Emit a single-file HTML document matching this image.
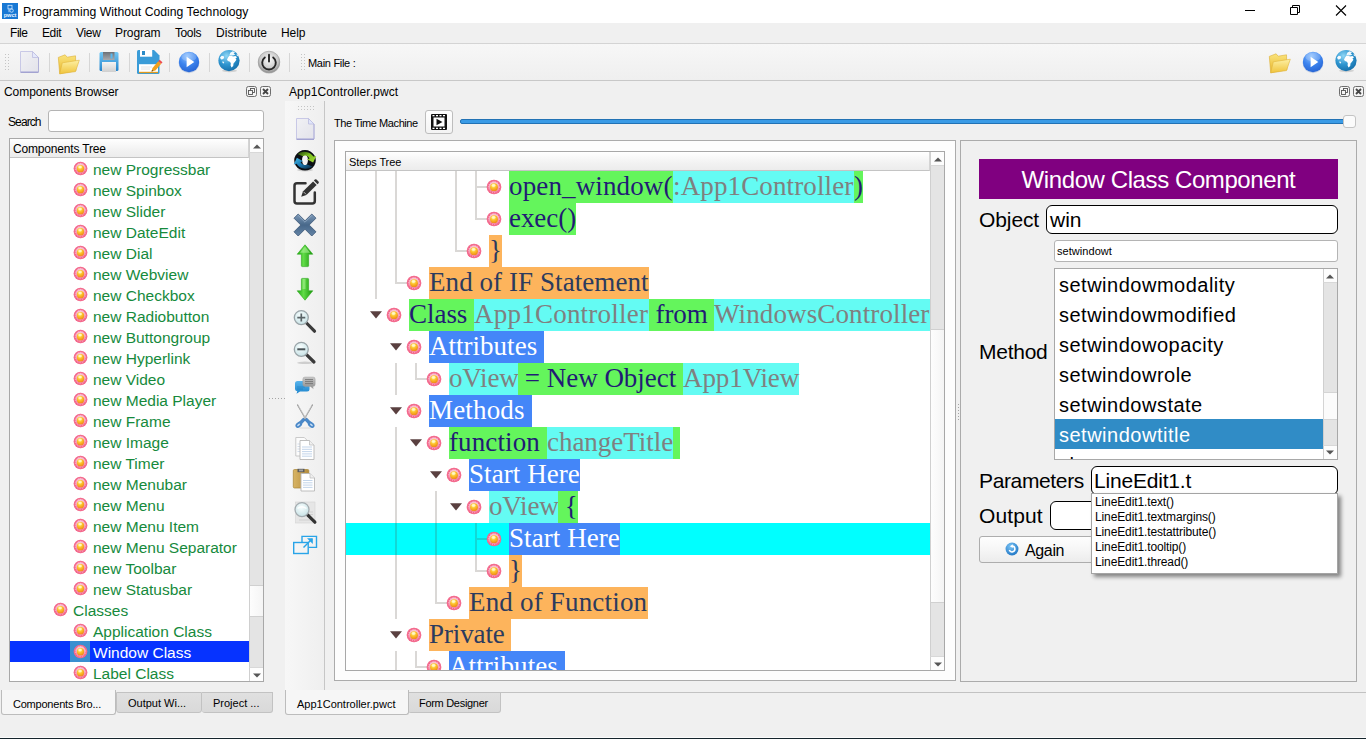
<!DOCTYPE html>
<html>
<head>
<meta charset="utf-8">
<title>PWCT</title>
<style>
*{box-sizing:border-box;margin:0;padding:0}
html,body{width:1366px;height:739px;overflow:hidden;background:#f0f0f0;font-family:"Liberation Sans",sans-serif;font-size:12px;color:#000}
.abs{position:absolute}
.t{position:absolute;white-space:nowrap;line-height:1}
#titlebar{left:0;top:0;width:1366px;height:23px;background:#fff}
#menubar{left:0;top:23px;width:1366px;height:20px;background:#f0f0f0}
#toolbar{left:0;top:43px;width:1366px;height:38px;background:linear-gradient(#f7f7f7,#efefef);border-top:1px solid #d4d4d4;border-bottom:1px solid #c8c8c8}
.menu{position:absolute;top:26px;font-size:12px;line-height:14px;white-space:nowrap}
.sep{position:absolute;top:53px;width:1px;height:19px;background:#d6d6d6}

.li{font-size:15.5px;line-height:21px;height:21px;margin-top:1px}
.tab{font-size:11px;line-height:13px}

.sg{position:absolute;height:32px;font-family:"Liberation Serif",serif;font-size:27px;line-height:31px;white-space:nowrap;overflow:visible}

.lbl{font-size:21px;line-height:24px}
.lit{left:4px;font-size:20px;line-height:28px;letter-spacing:.5px}
.pp{left:1095px;font-size:12px;line-height:14px;letter-spacing:-.12px}
/* SECTION-CSS */
</style>
</head>
<body>
<!-- title bar -->
<div class="abs" id="titlebar"></div>
<div class="abs" id="menubar"></div>
<div class="abs" id="toolbar"></div>

<svg width="0" height="0" style="position:absolute">
<defs>
<radialGradient id="gBallO" cx="50%" cy="40%" r="60%"><stop offset="0" stop-color="#fde4ec"/><stop offset="0.6" stop-color="#f9b8cc"/><stop offset="1" stop-color="#f37a9c"/></radialGradient>
<radialGradient id="gBallI" cx="42%" cy="30%" r="70%"><stop offset="0" stop-color="#fff6a8"/><stop offset="0.45" stop-color="#fcc52c"/><stop offset="1" stop-color="#f08a18"/></radialGradient>
<symbol id="ball" viewBox="0 0 16 16"><circle cx="8" cy="8" r="7.300" fill="#f2577f"/><circle cx="8" cy="8" r="6.700" fill="none" stroke="#f7a0b8" stroke-width=".5" opacity=".6"/><circle cx="8" cy="7.800" r="5.300" fill="url(#gBallO)"/><circle cx="8" cy="8" r="5.500" fill="none" stroke="#fff" stroke-width=".7" stroke-dasharray="1 .9" opacity=".8"/><circle cx="8" cy="8.200" r="3.900" fill="url(#gBallI)"/><ellipse cx="7.600" cy="6.400" rx="1.900" ry="1.300" fill="#fffbd0" opacity=".8"/></symbol>
<radialGradient id="gPlay" cx="42%" cy="22%" r="85%"><stop offset="0" stop-color="#8cc0ff"/><stop offset="0.5" stop-color="#3c84ee"/><stop offset="1" stop-color="#2460d0"/></radialGradient>
<symbol id="play" viewBox="0 0 24 24"><ellipse cx="12" cy="13.200" rx="10.300" ry="10" fill="#9db4d8" opacity=".5"/><circle cx="12" cy="12" r="10.200" fill="url(#gPlay)"/><ellipse cx="12" cy="7" rx="7.600" ry="4.400" fill="#fff" opacity=".2"/><path d="M9.600 6.700L17.300 12L9.600 17.300Z" fill="#fff"/></symbol>
<radialGradient id="gGlobe" cx="38%" cy="28%" r="80%"><stop offset="0" stop-color="#8fd6f5"/><stop offset="0.5" stop-color="#2f96d0"/><stop offset="1" stop-color="#136aa6"/></radialGradient>
<symbol id="globe" viewBox="0 0 24 24"><ellipse cx="12.500" cy="21.800" rx="7.500" ry="1.400" fill="#888" opacity=".3"/><circle cx="12" cy="11.600" r="10.600" fill="url(#gGlobe)"/><path d="M11.200 8.200l1.200-1.400 2.400-.3 1 .9 2.600-.4 1.800 1.300-1.700.9.900 1.600-1.600 2.300-1.300 1.300-.3 2.600-1.700 1.600-.9-2.200.2-2.400-1.300-1.600-1.600-.3-.9-1.600z" fill="#fff"/><path d="M13.500 3.600l2.200-1.400 2.300 1-1.400 1.300 1.900.9-2.700 1-1.600-.6-1.800.7.400-1.500z" fill="#fff" opacity=".92"/><path d="M3 8.600l1.700-1.800 2.100.4.300 1.700-1.400 1.300-1.700.2z" fill="#fff" opacity=".95"/><path d="M5.400 12.200l1.800.7-.4 1.700-1.300-.6z" fill="#fff" opacity=".9"/><path d="M19.600 4.800l1.800 1.500.4 1.300-2-.9z" fill="#fff" opacity=".85"/></symbol>
<linearGradient id="gFold1" x1="0" y1="0" x2="0" y2="1"><stop offset="0" stop-color="#fae47c"/><stop offset="1" stop-color="#e9b62c"/></linearGradient>
<linearGradient id="gFold2" x1="0" y1="0" x2="0" y2="1"><stop offset="0" stop-color="#fdf0a4"/><stop offset="1" stop-color="#f0c43c"/></linearGradient>
<symbol id="folder" viewBox="0 0 24 24"><path d="M1.800 5.400l6.800-2.600 2 2.400 8.400-1.400.4 15-16.200 3z" fill="url(#gFold1)" stroke="#dcae34" stroke-width=".6"/><path d="M3.200 21.800l2.600-11 17-2.600-3.800 11.400z" fill="url(#gFold2)" stroke="#e0b63c" stroke-width=".6"/></symbol>
</defs>
</svg>
<!-- title -->
<div class="abs" style="left:2px;top:3px;width:16px;height:16px;background:#1878d4"></div>
<svg class="abs" style="left:2px;top:3px" width="16" height="16" viewBox="0 0 16 16"><rect x="6" y="2.300" width="4" height="3.600" fill="none" stroke="#cfe6ff" stroke-width=".8"/><circle cx="9.600" cy="7.600" r="1.700" fill="none" stroke="#cfe6ff" stroke-width=".8"/><path d="M7 6v3.200" stroke="#cfe6ff" stroke-width=".8"/><text x="8" y="14.200" font-family="Liberation Sans" font-size="5.600" font-weight="bold" fill="#e8f3ff" text-anchor="middle">pwct</text></svg>
<div class="t" style="left:23px;top:5px;font-size:12.2px;line-height:14px;letter-spacing:.02px">Programming Without Coding Technology</div>
<!-- window buttons -->
<svg class="abs" style="left:1240px;top:0" width="126" height="23" viewBox="0 0 126 23"><path d="M5 10.500h10" stroke="#000" stroke-width="1"/><path d="M50.500 7.500h7v7h-7z M52.500 7.500v-2h7v7h-2" fill="none" stroke="#000" stroke-width="1"/><path d="M96 5.500l10 10M106 5.500l-10 10" stroke="#000" stroke-width="1.100"/></svg>
<!-- menu -->
<div class="menu" style="left:10px;letter-spacing:-0.45px">File</div>
<div class="menu" style="left:42px;letter-spacing:-0.4px">Edit</div>
<div class="menu" style="left:76px;letter-spacing:-0.3px">View</div>
<div class="menu" style="left:115px;letter-spacing:-0.08px">Program</div>
<div class="menu" style="left:175px;letter-spacing:-0.4px">Tools</div>
<div class="menu" style="left:216px;letter-spacing:0.03px">Distribute</div>
<div class="menu" style="left:281px;letter-spacing:-0.08px">Help</div>
<!-- toolbar -->
<svg class="abs" style="left:4px;top:53px" width="6" height="18" viewBox="0 0 6 18"><g fill="#c4c4c4"><rect x="1" y="1" width="1" height="1"/><rect x="1" y="4" width="1" height="1"/><rect x="1" y="7" width="1" height="1"/><rect x="1" y="10" width="1" height="1"/><rect x="1" y="13" width="1" height="1"/><rect x="1" y="16" width="1" height="1"/><rect x="4" y="1" width="1" height="1"/><rect x="4" y="4" width="1" height="1"/><rect x="4" y="7" width="1" height="1"/><rect x="4" y="10" width="1" height="1"/><rect x="4" y="13" width="1" height="1"/><rect x="4" y="16" width="1" height="1"/></g></svg>
<!-- new -->
<svg class="abs" style="left:18px;top:49px" width="24" height="26" viewBox="0 0 24 26"><defs><linearGradient id="gNew" x1="0" y1="0" x2="1" y2="1"><stop offset="0" stop-color="#f1f1f5"/><stop offset="1" stop-color="#e3e3ea"/></linearGradient></defs><path d="M2.500 2.500h12l6 6v14.500h-18z" fill="url(#gNew)" stroke="#c8c8e6" stroke-width="1"/><path d="M14.500 2.500v6h6z" fill="#e4e8fc" stroke="#bcbce0" stroke-width=".8"/><path d="M20.500 8.500v14.500" stroke="#b0b0d8" stroke-width="1"/><path d="M2.500 23.300h18" stroke="#a0a0d0" stroke-width="1.300"/></svg>
<div class="sep" style="left:49px"></div>
<svg class="abs" style="left:56px;top:52px" width="25" height="24"><use href="#folder"/></svg>
<div class="sep" style="left:89px"></div>
<!-- save -->
<svg class="abs" style="left:98px;top:51px" width="22" height="22" viewBox="0 0 22 22"><defs><linearGradient id="gSv" x1="0" y1="0" x2="0" y2="1"><stop offset="0" stop-color="#74c8f4"/><stop offset="1" stop-color="#2484cc"/></linearGradient><linearGradient id="gSh" x1="0" y1="0" x2="0" y2="1"><stop offset="0" stop-color="#6c7076"/><stop offset="1" stop-color="#a8aaae"/></linearGradient><linearGradient id="gLb" x1="0" y1="0" x2="0" y2="1"><stop offset="0" stop-color="#f4f4f4"/><stop offset="1" stop-color="#cfcfcf"/></linearGradient></defs><path d="M1.500 2.500q0-1.500 1.500-1.500h16q1.500 0 1.500 1.500v16q0 1.500-1.500 1.500h-16q-1.500 0-1.500-1.500z" fill="url(#gSv)"/><rect x="5" y="1" width="11.500" height="8" fill="url(#gSh)"/><rect x="12.500" y="2.500" width="2" height="5" fill="#58b8f0"/><rect x="4" y="11" width="14" height="10" fill="url(#gLb)"/></svg>
<div class="sep" style="left:129px"></div>
<!-- save as -->
<svg class="abs" style="left:136px;top:49px" width="27" height="26" viewBox="0 0 27 26"><path d="M2.500 1h15.500l5.500 5.500v17q0 1.500-1.500 1.500h-19.500q-1.500 0-1.500-1.500v-21q0-1.500 1.500-1.500z" fill="#3a9cd8"/><rect x="4" y="1" width="12.200" height="6.700" fill="#fff"/><rect x="6" y="2" width="3" height="4" fill="#2c8cc8"/><rect x="3" y="15.200" width="19" height="8.600" fill="#fff"/><path d="M5 18h11M5 20h9" stroke="#e4e4e4" stroke-width="1"/><rect x="3" y="22.800" width="19" height="1.300" fill="#e09a20"/><path d="M15.500 22.600l1-3.600 5.800-6.700 2.900 2.500-5.800 6.700z" fill="#f2a01c"/><path d="M22.300 12.300l1.300-1.500 2.900 2.500-1.300 1.500z" fill="#ee4a50"/><path d="M15.500 22.600l.5-1.700 1.200 1.100z" fill="#222"/></svg>
<div class="sep" style="left:169px"></div>
<svg class="abs" style="left:177px;top:50px" width="24" height="24"><use href="#play"/></svg>
<div class="sep" style="left:209px"></div>
<svg class="abs" style="left:217px;top:49px" width="24" height="24"><use href="#globe"/></svg>
<div class="sep" style="left:249px"></div>
<!-- power -->
<svg class="abs" style="left:257px;top:50px" width="24" height="24" viewBox="0 0 24 24"><defs><radialGradient id="gPw" cx="50%" cy="40%" r="60%"><stop offset="0" stop-color="#fafafa"/><stop offset="0.7" stop-color="#c8c8c8"/><stop offset="1" stop-color="#8c8c8c"/></radialGradient></defs><ellipse cx="12" cy="13" rx="11" ry="10.600" fill="#aaa" opacity=".5"/><circle cx="12" cy="12" r="10.800" fill="url(#gPw)" stroke="#9a9a9a" stroke-width=".6"/><path d="M7.800 7.400a6.800 6.800 0 1 0 8.400 0" fill="none" stroke="#262626" stroke-width="1.900" stroke-linecap="round"/><path d="M12 4.600v7" stroke="#262626" stroke-width="1.900" stroke-linecap="round"/></svg>
<div class="sep" style="left:289px"></div>
<svg class="abs" style="left:300px;top:53px" width="6" height="18" viewBox="0 0 6 18"><g fill="#c4c4c4"><rect x="1" y="1" width="1" height="1"/><rect x="1" y="4" width="1" height="1"/><rect x="1" y="7" width="1" height="1"/><rect x="1" y="10" width="1" height="1"/><rect x="1" y="13" width="1" height="1"/><rect x="1" y="16" width="1" height="1"/><rect x="4" y="1" width="1" height="1"/><rect x="4" y="4" width="1" height="1"/><rect x="4" y="7" width="1" height="1"/><rect x="4" y="10" width="1" height="1"/><rect x="4" y="13" width="1" height="1"/><rect x="4" y="16" width="1" height="1"/></g></svg>
<div class="t" style="left:308px;top:57px;font-size:11px;line-height:13px;letter-spacing:-.3px">Main File :</div>
<!-- right toolbar icons -->
<svg class="abs" style="left:1267px;top:51px" width="25" height="24"><use href="#folder"/></svg>
<svg class="abs" style="left:1301px;top:50px" width="24" height="24"><use href="#play"/></svg>
<svg class="abs" style="left:1334px;top:49px" width="24" height="24"><use href="#globe"/></svg>

<!-- SECTION-TOP -->

<!-- LEFT DOCK -->
<div class="t" style="left:4px;top:85px;font-size:12px;line-height:14px;letter-spacing:-.05px">Components Browser</div>
<svg class="abs dockbtn" style="left:246px;top:86px" width="11" height="11" viewBox="0 0 11 11"><rect x=".5" y=".5" width="10" height="10" rx="2" fill="#f4f4f4" stroke="#6e6e6e"/><rect x="4.500" y="2.500" width="4" height="4" fill="none" stroke="#555" stroke-width=".9"/><rect x="2.500" y="4.500" width="4" height="4" fill="#f4f4f4" stroke="#555" stroke-width=".9"/></svg>
<svg class="abs dockbtn" style="left:260px;top:86px" width="11" height="11" viewBox="0 0 11 11"><rect x=".5" y=".5" width="10" height="10" rx="2" fill="#f4f4f4" stroke="#6e6e6e"/><path d="M3 3l5 5M8 3l-5 5" stroke="#444" stroke-width="1.800"/></svg>
<div class="t" style="left:8px;top:115px;font-size:12px;line-height:14px;letter-spacing:-.9px">Search</div>
<div class="abs" style="left:48px;top:110px;width:216px;height:22px;background:#fff;border:1px solid #b4b4b4;border-radius:3px"></div>
<!-- tree -->
<div class="abs" id="ltree" style="left:9px;top:138px;width:255px;height:544px;background:#fff;border:1px solid #a8a8a8;overflow:hidden">
<div class="abs" style="left:0;top:0;width:239px;height:19px;background:linear-gradient(#ffffff,#f2f2f2 60%,#ececec);border-bottom:1px solid #c4c4c4;border-right:1px solid #d4d4d4"></div>
<div class="t" style="left:3px;top:3px;font-size:12px;line-height:14px;letter-spacing:-.18px">Components Tree</div>
<svg class="abs" style="left:62.5px;top:21.5px" width="15" height="15"><use href="#ball"/></svg><div class="t li" style="left:83px;top:19px;color:#168a3c">new Progressbar</div><svg class="abs" style="left:62.5px;top:42.5px" width="15" height="15"><use href="#ball"/></svg><div class="t li" style="left:83px;top:40px;color:#168a3c">new Spinbox</div><svg class="abs" style="left:62.5px;top:63.5px" width="15" height="15"><use href="#ball"/></svg><div class="t li" style="left:83px;top:61px;color:#168a3c">new Slider</div><svg class="abs" style="left:62.5px;top:84.5px" width="15" height="15"><use href="#ball"/></svg><div class="t li" style="left:83px;top:82px;color:#168a3c">new DateEdit</div><svg class="abs" style="left:62.5px;top:105.5px" width="15" height="15"><use href="#ball"/></svg><div class="t li" style="left:83px;top:103px;color:#168a3c">new Dial</div><svg class="abs" style="left:62.5px;top:126.5px" width="15" height="15"><use href="#ball"/></svg><div class="t li" style="left:83px;top:124px;color:#168a3c">new Webview</div><svg class="abs" style="left:62.5px;top:147.5px" width="15" height="15"><use href="#ball"/></svg><div class="t li" style="left:83px;top:145px;color:#168a3c">new Checkbox</div><svg class="abs" style="left:62.5px;top:168.5px" width="15" height="15"><use href="#ball"/></svg><div class="t li" style="left:83px;top:166px;color:#168a3c">new Radiobutton</div><svg class="abs" style="left:62.5px;top:189.5px" width="15" height="15"><use href="#ball"/></svg><div class="t li" style="left:83px;top:187px;color:#168a3c">new Buttongroup</div><svg class="abs" style="left:62.5px;top:210.5px" width="15" height="15"><use href="#ball"/></svg><div class="t li" style="left:83px;top:208px;color:#168a3c">new Hyperlink</div><svg class="abs" style="left:62.5px;top:231.5px" width="15" height="15"><use href="#ball"/></svg><div class="t li" style="left:83px;top:229px;color:#168a3c">new Video</div><svg class="abs" style="left:62.5px;top:252.5px" width="15" height="15"><use href="#ball"/></svg><div class="t li" style="left:83px;top:250px;color:#168a3c">new Media Player</div><svg class="abs" style="left:62.5px;top:273.5px" width="15" height="15"><use href="#ball"/></svg><div class="t li" style="left:83px;top:271px;color:#168a3c">new Frame</div><svg class="abs" style="left:62.5px;top:294.5px" width="15" height="15"><use href="#ball"/></svg><div class="t li" style="left:83px;top:292px;color:#168a3c">new Image</div><svg class="abs" style="left:62.5px;top:315.5px" width="15" height="15"><use href="#ball"/></svg><div class="t li" style="left:83px;top:313px;color:#168a3c">new Timer</div><svg class="abs" style="left:62.5px;top:336.5px" width="15" height="15"><use href="#ball"/></svg><div class="t li" style="left:83px;top:334px;color:#168a3c">new Menubar</div><svg class="abs" style="left:62.5px;top:357.5px" width="15" height="15"><use href="#ball"/></svg><div class="t li" style="left:83px;top:355px;color:#168a3c">new Menu</div><svg class="abs" style="left:62.5px;top:378.5px" width="15" height="15"><use href="#ball"/></svg><div class="t li" style="left:83px;top:376px;color:#168a3c">new Menu Item</div><svg class="abs" style="left:62.5px;top:399.5px" width="15" height="15"><use href="#ball"/></svg><div class="t li" style="left:83px;top:397px;color:#168a3c">new Menu Separator</div><svg class="abs" style="left:62.5px;top:420.5px" width="15" height="15"><use href="#ball"/></svg><div class="t li" style="left:83px;top:418px;color:#168a3c">new Toolbar</div><svg class="abs" style="left:62.5px;top:441.5px" width="15" height="15"><use href="#ball"/></svg><div class="t li" style="left:83px;top:439px;color:#168a3c">new Statusbar</div><svg class="abs" style="left:42.5px;top:462.5px" width="15" height="15"><use href="#ball"/></svg><div class="t li" style="left:63px;top:460px;color:#168a3c">Classes</div><svg class="abs" style="left:62.5px;top:483.5px" width="15" height="15"><use href="#ball"/></svg><div class="t li" style="left:83px;top:481px;color:#168a3c">Application Class</div><div class="abs" style="left:0;top:502px;width:239px;height:21px;background:#0633ff"></div><div class="abs" style="left:60px;top:502px;width:20px;height:21px;background:#3a8fd0"></div><svg class="abs" style="left:62.5px;top:504.5px" width="15" height="15"><use href="#ball"/></svg><div class="t li" style="left:83px;top:502px;color:#fff">Window Class</div><svg class="abs" style="left:62.5px;top:525.5px" width="15" height="15"><use href="#ball"/></svg><div class="t li" style="left:83px;top:523px;color:#168a3c">Label Class</div>
<!-- left tree scrollbar -->
<div class="abs" style="left:239px;top:0;width:15px;height:543px;background:#e4e4e4;border-left:1px solid #cfcfcf"></div>
<div class="abs" style="left:239px;top:0;width:15px;height:14px;background:#fdfdfd;border-left:1px solid #cfcfcf;border-bottom:1px solid #d8d8d8"></div>
<svg class="abs" style="left:243px;top:5px" width="8" height="5" viewBox="0 0 8 5"><path d="M0 4.500L4 0.500L8 4.500z" fill="#555"/></svg>
<div class="abs" style="left:239px;top:446px;width:15px;height:32px;background:linear-gradient(90deg,#fdfdfd,#f4f4f4);border:1px solid #d0d0d0;border-right:none"></div>
<div class="abs" style="left:239px;top:528px;width:15px;height:15px;background:#fdfdfd;border-left:1px solid #cfcfcf;border-top:1px solid #d8d8d8"></div>
<svg class="abs" style="left:243px;top:534px" width="8" height="5" viewBox="0 0 8 5"><path d="M0 .5L4 4.500L8 .5z" fill="#555"/></svg>
</div>
<!-- left tabs -->
<div class="abs" style="left:116px;top:692px;width:86px;height:21px;background:linear-gradient(#e0e0e0,#d9d9d9);border:1px solid #c2c2c2;border-radius:0 0 3px 3px"></div>
<div class="abs" style="left:202px;top:692px;width:71px;height:21px;background:linear-gradient(#e0e0e0,#d9d9d9);border:1px solid #c2c2c2;border-left:none;border-radius:0 0 3px 3px"></div>
<div class="abs" style="left:1px;top:690px;width:115px;height:25px;background:#f6f6f6;border:1px solid #bcbcbc;border-top:none;border-radius:0 0 3px 3px"></div>
<div class="t tab" style="left:13px;top:698px;letter-spacing:-.22px">Components Bro...</div>
<div class="t tab" style="left:128px;top:697px">Output Wi...</div>
<div class="t tab" style="left:213px;top:697px">Project ...</div>
<!-- SECTION-LEFT -->

<!-- MID DOCK -->
<div class="t" style="left:289px;top:85px;font-size:12px;line-height:14px;letter-spacing:.1px">App1Controller.pwct</div>
<svg class="abs" style="left:1339px;top:86px" width="11" height="11" viewBox="0 0 11 11"><rect x=".5" y=".5" width="10" height="10" rx="2" fill="#f4f4f4" stroke="#6e6e6e"/><rect x="4.500" y="2.500" width="4" height="4" fill="none" stroke="#555" stroke-width=".9"/><rect x="2.500" y="4.500" width="4" height="4" fill="#f4f4f4" stroke="#555" stroke-width=".9"/></svg>
<svg class="abs" style="left:1353px;top:86px" width="11" height="11" viewBox="0 0 11 11"><rect x=".5" y=".5" width="10" height="10" rx="2" fill="#f4f4f4" stroke="#6e6e6e"/><path d="M3 3l5 5M8 3l-5 5" stroke="#444" stroke-width="1.800"/></svg>
<!-- vertical toolbar -->
<div class="abs" style="left:285px;top:101px;width:40px;height:590px;background:linear-gradient(90deg,#f7f7f7,#efefef);border-right:1px solid #c6c6c6"></div>
<svg class="abs" style="left:297px;top:105px" width="18" height="6" viewBox="0 0 18 6"><g fill="#c4c4c4"><rect x="1" y="1" width="1" height="1"/><rect x="4" y="1" width="1" height="1"/><rect x="7" y="1" width="1" height="1"/><rect x="10" y="1" width="1" height="1"/><rect x="13" y="1" width="1" height="1"/><rect x="16" y="1" width="1" height="1"/><rect x="1" y="4" width="1" height="1"/><rect x="4" y="4" width="1" height="1"/><rect x="7" y="4" width="1" height="1"/><rect x="10" y="4" width="1" height="1"/><rect x="13" y="4" width="1" height="1"/><rect x="16" y="4" width="1" height="1"/></g></svg>

<!-- v: new -->
<svg class="abs" style="left:295px;top:117px" width="21" height="24" viewBox="0 0 21 24"><path d="M1.500 1.500h12l5.500 5.500v15h-17.500z" fill="url(#gNew)" stroke="#c8c8e6" stroke-width="1"/><path d="M13.500 1.500v5.500h5.500z" fill="#e0e6fc" stroke="#bcbce0" stroke-width=".8"/><path d="M19 7v15" stroke="#b0b0d8" stroke-width="1"/><path d="M1.500 22.300h17.500" stroke="#a0a0d0" stroke-width="1.300"/></svg>
<!-- v: refresh -->
<svg class="abs" style="left:293px;top:149px" width="24" height="23" viewBox="0 0 24 23"><defs><linearGradient id="gRg" x1="0" y1="0" x2="1" y2="1"><stop offset="0" stop-color="#1c3c08"/><stop offset="0.45" stop-color="#7cc020"/><stop offset="1" stop-color="#a4dc38"/></linearGradient><linearGradient id="gRb" x1="1" y1="1" x2="0" y2="0"><stop offset="0" stop-color="#0a2238"/><stop offset="0.5" stop-color="#1a78b0"/><stop offset="1" stop-color="#44bcec"/></linearGradient></defs>
<ellipse cx="12" cy="21" rx="8" ry="1.400" fill="#000" opacity=".15"/>
<path d="M12 1a10.800 10.300 0 1 0 .01 0z M12 5.600a2.900 5.500 0 1 1-.01 0z" fill="#0b0e13" fill-rule="evenodd"/>
<path d="M4.600 5a10.600 10 0 0 1 15.800 2.600l2.900-.6-3.200 6.600-6.200-3.400 2.600-.8a5.200 6.200 0 0 0-6.600-2.200z" fill="url(#gRg)"/>
<path d="M19.400 17.600a10.600 10 0 0 1-15.800-2.800l-2.900.6 3.200-6.600 6.200 3.400-2.600.8a5.200 6.200 0 0 0 6.600 2.400z" fill="url(#gRb)"/>
</svg>
<!-- v: edit -->
<svg class="abs" style="left:292px;top:179px" width="27" height="27" viewBox="0 0 27 27"><path d="M13.500 4.200h-8.500q-2.500 0-2.500 2.500v15.300q0 2.500 2.500 2.500h15.300q2.500 0 2.500-2.500v-8.500" fill="none" stroke="#333" stroke-width="2.500" stroke-linecap="round"/><path d="M9.200 17.800l1.700-5.200 10.200-10.200 3.500 3.500-10.200 10.200z" fill="#333"/><path d="M21.900 1.600l1-1q.8-.6 1.600 0l2 2q.6.800 0 1.600l-1 1z" fill="#333"/><path d="M11.600 12.900l2.500 2.500" stroke="#f4f4f4" stroke-width=".7"/></svg>
<!-- v: X -->
<svg class="abs" style="left:293px;top:213px" width="24" height="24" viewBox="0 0 24 24"><defs><linearGradient id="gX" x1="0" y1="0" x2="0" y2="1"><stop offset="0" stop-color="#7e9ab8"/><stop offset="0.5" stop-color="#48688a"/><stop offset="1" stop-color="#6484a6"/></linearGradient></defs><path d="M5.200 1l6.800 6.800 6.800-6.800 4.200 4.200-6.800 6.800 6.800 6.800-4.200 4.200-6.800-6.800-6.800 6.800-4.200-4.200 6.800-6.800-6.800-6.800z" fill="url(#gX)" stroke="#3a5676" stroke-width=".8" stroke-linejoin="round"/><path d="M5.200 2.400l6.800 6.800 6.800-6.800" fill="none" stroke="#a8c0d8" stroke-width=".8" opacity=".7"/></svg>
<!-- v: up -->
<svg class="abs" style="left:296px;top:244px" width="18" height="24" viewBox="0 0 18 24"><defs><linearGradient id="gUp" x1="0" y1="0" x2="1" y2="0"><stop offset="0" stop-color="#22a814"/><stop offset="0.4" stop-color="#62dc48"/><stop offset="1" stop-color="#17940c"/></linearGradient></defs><path d="M9 .8l7.800 9.400h-4.200v11.600q0 .8-.8.800h-5.600q-.8 0-.8-.8v-11.600h-4.200z" fill="url(#gUp)" stroke="#2aa81a" stroke-width=".6"/><path d="M9 2.500l5 6.200h-10z" fill="#b4f4a0" opacity=".55"/></svg>
<!-- v: down -->
<svg class="abs" style="left:296px;top:277px" width="18" height="24" viewBox="0 0 18 24"><path d="M9 23.200l7.800-9.400h-4.200v-11.600q0-.8-.8-.8h-5.600q-.8 0-.8.800v11.600h-4.200z" fill="url(#gUp)" stroke="#2aa81a" stroke-width=".6"/><path d="M6.500 2h3v10h-3z" fill="#b4f4a0" opacity=".5"/></svg>
<!-- v: zoom in -->
<svg class="abs" style="left:292px;top:308px" width="26" height="26" viewBox="0 0 26 26"><defs><radialGradient id="gLens" cx="45%" cy="35%" r="70%"><stop offset="0" stop-color="#f8fefe"/><stop offset="1" stop-color="#c4e0e4"/></radialGradient></defs><path d="M14.500 15l8 8.200" stroke="#3a3a3a" stroke-width="3.200" stroke-linecap="round"/><circle cx="9.300" cy="9.600" r="7" fill="url(#gLens)" stroke="#9aa4a8" stroke-width="1.300"/><path d="M5.300 9.600h8M9.300 5.600v8" stroke="#5a6468" stroke-width="1.700"/></svg>
<!-- v: zoom out -->
<svg class="abs" style="left:292px;top:340px" width="26" height="26" viewBox="0 0 26 26"><ellipse cx="13" cy="22.800" rx="8" ry="1.300" fill="#000" opacity=".15"/><path d="M14.500 14.600l7.500 7.400" stroke="#3a3a3a" stroke-width="3.200" stroke-linecap="round"/><circle cx="9.300" cy="9.300" r="7" fill="url(#gLens)" stroke="#9aa4a8" stroke-width="1.300"/><path d="M5.300 9.300h8" stroke="#4a5458" stroke-width="2"/></svg>
<!-- v: chat -->
<svg class="abs" style="left:294px;top:375px" width="23" height="20" viewBox="0 0 23 20"><defs><linearGradient id="gCb" x1="0" y1="0" x2="0" y2="1"><stop offset="0" stop-color="#58b4ec"/><stop offset="1" stop-color="#1c84cc"/></linearGradient><linearGradient id="gCg" x1="0" y1="0" x2="0" y2="1"><stop offset="0" stop-color="#c8c8c8"/><stop offset="1" stop-color="#909090"/></linearGradient></defs><path d="M3.500 6h9.500q2.500 0 2.500 2.500v5.500q0 2.500-2.500 2.500h-7l-3.500 2.300.8-2.500q-2.300-.3-2.300-2.300v-5.500q0-2.500 2.500-2.500z" fill="url(#gCb)"/><path d="M3 12h8M3 14h6" stroke="#1470b0" stroke-width=".7" opacity=".6"/><path d="M11 2h8q2.200 0 2.200 2.200v5q0 2.200-2.200 2.200h-.3l.6 2.200-2.900-2.200h-5.400q-2.200 0-2.200-2.200v-5q0-2.200 2.200-2.200z" fill="url(#gCg)" stroke="#9c9c9c" stroke-width=".4"/><path d="M11 4.600h8M11 6.600h8M11 8.600h8" stroke="#747474" stroke-width=".9"/></svg>
<!-- v: scissors -->
<svg class="abs" style="left:294px;top:404px" width="22" height="25" viewBox="0 0 22 25"><path d="M3.600 1l8.400 14.500M18.400 1l-8.400 14.500" stroke="#909090" stroke-width="1.300" stroke-linecap="round"/><path d="M4.300 1.600l7.300 12.800M17.700 1.600l-7.300 12.800" stroke="#ececec" stroke-width=".5"/><path d="M9.800 15.500l-4.600 4.700M12.200 15.500l4.600 4.700" stroke="#4a88c8" stroke-width="3.400" stroke-linecap="round"/><ellipse cx="4.800" cy="20.700" rx="3.700" ry="2.500" transform="rotate(-38 4.800 20.700)" fill="#4a88c8"/><ellipse cx="17.200" cy="20.700" rx="3.700" ry="2.500" transform="rotate(38 17.200 20.700)" fill="#4a88c8"/><ellipse cx="4.600" cy="20.900" rx="1.700" ry=".9" transform="rotate(-38 4.600 20.900)" fill="#c4dcf4"/><ellipse cx="17.400" cy="20.900" rx="1.700" ry=".9" transform="rotate(38 17.400 20.900)" fill="#c4dcf4"/><circle cx="11" cy="14" r=".9" fill="#fff" stroke="#777" stroke-width=".5"/><path d="M5.500 24h11" stroke="#000" stroke-width=".8" opacity=".12"/></svg>
<!-- v: copy -->
<svg class="abs" style="left:294px;top:436px" width="22" height="25" viewBox="0 0 22 25"><path d="M1.800 1.500h8.500l4 4v14.500h-12.500z" fill="#fcfcfc" stroke="#c4c4c4" stroke-width=".9"/><path d="M3.500 8h3M3.500 10.500h3M3.500 13h3M3.500 15.500h3" stroke="#c8d4e4" stroke-width=".8"/><path d="M6 4.500h9.500l4.500 4.500v14.500h-14z" fill="#fff" stroke="#b8b8b8" stroke-width=".9"/><path d="M15.500 4.500v4.500h4.500" fill="#f0f0f0" stroke="#b8b8b8" stroke-width=".7"/><path d="M8 11h10M8 13.300h10M8 15.600h10M8 17.900h10M8 20.200h10" stroke="#bcd0e8" stroke-width=".9"/></svg>
<!-- v: paste -->
<svg class="abs" style="left:292px;top:468px" width="24" height="24" viewBox="0 0 24 24"><defs><linearGradient id="gPa" x1="0" y1="0" x2="1" y2="0"><stop offset="0" stop-color="#d8b464"/><stop offset="1" stop-color="#b48c3c"/></linearGradient></defs><rect x="1.300" y="1.500" width="15.500" height="18.500" rx="1.200" fill="url(#gPa)" stroke="#a88434" stroke-width=".7"/><rect x="5.500" y=".8" width="7" height="3.400" fill="#5c5c5c"/><rect x="7" y="1.500" width="4" height="1.800" fill="#a4a4a4"/><path d="M9 5.500h9l4.500 4.500v13h-13.500z" fill="#fff" stroke="#b8b8b8" stroke-width=".9"/><path d="M18 5.500v4.500h4.500" fill="#f0f0f0" stroke="#b8b8b8" stroke-width=".7"/><path d="M11 12.500h9.500M11 14.800h9.500M11 17.100h9.500M11 19.400h9.500" stroke="#bcd0e8" stroke-width=".9"/></svg>
<!-- v: find -->
<svg class="abs" style="left:293px;top:500px" width="25" height="25" viewBox="0 0 25 25"><rect x="2.500" y="2" width="19.500" height="21" fill="#e6e6e6" stroke="#d4d4d4" stroke-width=".6"/><path d="M13 12h7M13 14.500h7M6 20h12" stroke="#cfcfcf" stroke-width="1.200"/><path d="M14.300 14.600l7.600 7.600" stroke="#333" stroke-width="3.200" stroke-linecap="round"/><circle cx="9" cy="9.600" r="7" fill="url(#gLens)" stroke="#a4acb0" stroke-width="1.300"/><path d="M4.500 8.500q4-3.500 9 0" stroke="#fff" stroke-width="1.500" fill="none" opacity=".9"/></svg>
<!-- v: popout -->
<svg class="abs" style="left:292px;top:534px" width="26" height="22" viewBox="0 0 26 22"><g fill="none" stroke="#28a4e8" stroke-width="1.400"><path d="M10 8.200v-5.800h14.500v11h-8"/><rect x="1.700" y="8.500" width="14.500" height="11"/><path d="M11.500 13.500l8.500-8.500"/></g><path d="M15 4.300h5.800v5.800z" fill="#28a4e8"/></svg>

<!-- time machine -->
<div class="t" style="left:334px;top:117px;font-size:11px;line-height:13px;letter-spacing:-.42px">The Time Machine</div>
<div class="abs" style="left:425px;top:110px;width:28px;height:24px;background:linear-gradient(#fefefe,#f3f3f3);border:1px solid #bdbdbd;border-radius:3px"></div>
<svg class="abs" style="left:431px;top:114px" width="16" height="16" viewBox="0 0 16 16"><rect x="0" y="0" width="16" height="16" rx="1" fill="#111"/><rect x="2.500" y="3.500" width="11" height="9" fill="#fff"/><path d="M5.500 4.800v6.400l6-3.200z" fill="#111"/><g fill="#fff"><rect x="1.500" y="1" width="2" height="1.300"/><rect x="5" y="1" width="2" height="1.300"/><rect x="8.500" y="1" width="2" height="1.300"/><rect x="12" y="1" width="2" height="1.300"/><rect x="1.500" y="13.700" width="2" height="1.300"/><rect x="5" y="13.700" width="2" height="1.300"/><rect x="8.500" y="13.700" width="2" height="1.300"/><rect x="12" y="13.700" width="2" height="1.300"/></g></svg>
<div class="abs" style="left:460px;top:119px;width:892px;height:5px;background:#3a9be6;border:1px solid #2272b4;border-radius:2px"></div>
<div class="abs" style="left:1343px;top:115px;width:13px;height:13px;background:#fbfbfb;border:1px solid #c4c4c4;border-radius:3px"></div>
<!-- frame -->
<div class="abs" style="left:334px;top:140px;width:622px;height:541px;background:#fdfdfd;border:1px solid #ababab"></div>
<!-- TREE-START --><div class="abs" id="stree" style="left:345px;top:151px;width:600px;height:520px;background:#fff;border:1px solid #a8a8a8;overflow:hidden"><div class="abs" style="left:0;top:371px;width:584px;height:32px;background:#00ffff"></div><div class="abs" style="left:29px;top:19px;width:2px;height:128px;background:rgba(80,70,60,.21)"></div><div class="abs" style="left:49px;top:19px;width:2px;height:96px;background:rgba(80,70,60,.21)"></div><div class="abs" style="left:49px;top:115px;width:2px;height:17px;background:rgba(80,70,60,.21)"></div><div class="abs" style="left:51px;top:130px;width:10px;height:2px;background:rgba(80,70,60,.21)"></div><div class="abs" style="left:109px;top:19px;width:2px;height:64px;background:rgba(80,70,60,.21)"></div><div class="abs" style="left:109px;top:83px;width:2px;height:17px;background:rgba(80,70,60,.21)"></div><div class="abs" style="left:111px;top:98px;width:10px;height:2px;background:rgba(80,70,60,.21)"></div><div class="abs" style="left:129px;top:19px;width:2px;height:32px;background:rgba(80,70,60,.21)"></div><div class="abs" style="left:131px;top:34px;width:10px;height:2px;background:rgba(80,70,60,.21)"></div><div class="abs" style="left:129px;top:51px;width:2px;height:17px;background:rgba(80,70,60,.21)"></div><div class="abs" style="left:131px;top:66px;width:10px;height:2px;background:rgba(80,70,60,.21)"></div><div class="abs" style="left:49px;top:211px;width:2px;height:32px;background:rgba(80,70,60,.21)"></div><div class="abs" style="left:69px;top:211px;width:2px;height:17px;background:rgba(80,70,60,.21)"></div><div class="abs" style="left:71px;top:226px;width:10px;height:2px;background:rgba(80,70,60,.21)"></div><div class="abs" style="left:49px;top:275px;width:2px;height:192px;background:rgba(80,70,60,.21)"></div><div class="abs" style="left:89px;top:339px;width:2px;height:96px;background:rgba(80,70,60,.21)"></div><div class="abs" style="left:89px;top:435px;width:2px;height:17px;background:rgba(80,70,60,.21)"></div><div class="abs" style="left:91px;top:450px;width:10px;height:2px;background:rgba(80,70,60,.21)"></div><div class="abs" style="left:129px;top:371px;width:2px;height:32px;background:rgba(80,70,60,.21)"></div><div class="abs" style="left:131px;top:386px;width:10px;height:2px;background:rgba(80,70,60,.21)"></div><div class="abs" style="left:129px;top:403px;width:2px;height:17px;background:rgba(80,70,60,.21)"></div><div class="abs" style="left:131px;top:418px;width:10px;height:2px;background:rgba(80,70,60,.21)"></div><div class="abs" style="left:49px;top:499px;width:2px;height:21px;background:rgba(80,70,60,.21)"></div><div class="abs" style="left:69px;top:499px;width:2px;height:17px;background:rgba(80,70,60,.21)"></div><div class="abs" style="left:71px;top:514px;width:10px;height:2px;background:rgba(80,70,60,.21)"></div><svg class="abs" style="left:140px;top:27px" width="16" height="16"><use href="#ball"/></svg><div class="sg" style="left:163px;top:19px;width:164px;background:#64f55c;color:#221b74;letter-spacing:0.134px">open_window(</div><div class="sg" style="left:327px;top:19px;width:181px;background:#64fbf3;color:#808080;letter-spacing:0.134px">:App1Controller</div><div class="sg" style="left:508px;top:19px;width:9px;background:#64f55c;color:#221b74;letter-spacing:0.000px">)</div><svg class="abs" style="left:140px;top:59px" width="16" height="16"><use href="#ball"/></svg><div class="sg" style="left:163px;top:51px;width:67px;background:#64f55c;color:#221b74;letter-spacing:-0.058px">exec()</div><svg class="abs" style="left:120px;top:91px" width="16" height="16"><use href="#ball"/></svg><div class="sg" style="left:143px;top:83px;width:13px;background:#fdb45c;color:#2c3b5e;letter-spacing:0.025px">}</div><svg class="abs" style="left:60px;top:123px" width="16" height="16"><use href="#ball"/></svg><div class="sg" style="left:83px;top:115px;width:220px;background:#fdb45c;color:#2c3b5e;letter-spacing:0.075px">End&nbsp;of&nbsp;IF&nbsp;Statement</div><svg class="abs" style="left:24px;top:159px" width="12" height="8" viewBox="0 0 12 8"><path d="M0 .3h12L6 7.600z" fill="#5a4040"/></svg><svg class="abs" style="left:40px;top:155px" width="16" height="16"><use href="#ball"/></svg><div class="sg" style="left:63px;top:147px;width:65px;background:#64f55c;color:#221b74;letter-spacing:-0.035px">Class&nbsp;</div><div class="sg" style="left:128px;top:147px;width:175px;background:#64fbf3;color:#808080;letter-spacing:0.229px">App1Controller</div><div class="sg" style="left:303px;top:147px;width:65px;background:#64f55c;color:#221b74;letter-spacing:-0.131px">&nbsp;from&nbsp;</div><div class="sg" style="left:368px;top:147px;width:216px;background:#64fbf3;color:#808080;letter-spacing:0.123px">WindowsController</div><svg class="abs" style="left:44px;top:191px" width="12" height="8" viewBox="0 0 12 8"><path d="M0 .3h12L6 7.600z" fill="#5a4040"/></svg><svg class="abs" style="left:60px;top:187px" width="16" height="16"><use href="#ball"/></svg><div class="sg" style="left:83px;top:179px;width:115px;background:#4486f8;color:#ffffff;letter-spacing:0.018px">Attributes&nbsp;</div><svg class="abs" style="left:80px;top:219px" width="16" height="16"><use href="#ball"/></svg><div class="sg" style="left:103px;top:211px;width:69px;background:#64fbf3;color:#808080;letter-spacing:-0.150px">oView</div><div class="sg" style="left:172px;top:211px;width:165px;background:#64f55c;color:#221b74;letter-spacing:-0.011px">&nbsp;=&nbsp;New&nbsp;Object&nbsp;</div><div class="sg" style="left:337px;top:211px;width:116px;background:#64fbf3;color:#808080;letter-spacing:-0.086px">App1View</div><svg class="abs" style="left:44px;top:255px" width="12" height="8" viewBox="0 0 12 8"><path d="M0 .3h12L6 7.600z" fill="#5a4040"/></svg><svg class="abs" style="left:60px;top:251px" width="16" height="16"><use href="#ball"/></svg><div class="sg" style="left:83px;top:243px;width:103px;background:#4486f8;color:#ffffff;letter-spacing:0.175px">Methods&nbsp;</div><svg class="abs" style="left:64px;top:287px" width="12" height="8" viewBox="0 0 12 8"><path d="M0 .3h12L6 7.600z" fill="#5a4040"/></svg><svg class="abs" style="left:80px;top:283px" width="16" height="16"><use href="#ball"/></svg><div class="sg" style="left:103px;top:275px;width:98px;background:#64f55c;color:#221b74;letter-spacing:0.113px">function&nbsp;</div><div class="sg" style="left:201px;top:275px;width:126px;background:#64fbf3;color:#808080;letter-spacing:-0.035px">changeTitle</div><div class="sg" style="left:327px;top:275px;width:7px;background:#64f55c;color:#221b74"></div><svg class="abs" style="left:84px;top:319px" width="12" height="8" viewBox="0 0 12 8"><path d="M0 .3h12L6 7.600z" fill="#5a4040"/></svg><svg class="abs" style="left:100px;top:315px" width="16" height="16"><use href="#ball"/></svg><div class="sg" style="left:123px;top:307px;width:111px;background:#4486f8;color:#ffffff;letter-spacing:0.064px">Start&nbsp;Here</div><svg class="abs" style="left:104px;top:351px" width="12" height="8" viewBox="0 0 12 8"><path d="M0 .3h12L6 7.600z" fill="#5a4040"/></svg><svg class="abs" style="left:120px;top:347px" width="16" height="16"><use href="#ball"/></svg><div class="sg" style="left:143px;top:339px;width:69px;background:#64fbf3;color:#808080;letter-spacing:-0.150px">oView</div><div class="sg" style="left:212px;top:339px;width:20px;background:#64f55c;color:#221b74;letter-spacing:0.113px">&nbsp;{</div><svg class="abs" style="left:140px;top:379px" width="16" height="16"><use href="#ball"/></svg><div class="sg" style="left:163px;top:371px;width:111px;background:#4486f8;color:#ffffff;letter-spacing:0.064px">Start&nbsp;Here</div><svg class="abs" style="left:140px;top:411px" width="16" height="16"><use href="#ball"/></svg><div class="sg" style="left:163px;top:403px;width:13px;background:#fdb45c;color:#2c3b5e;letter-spacing:0.025px">}</div><svg class="abs" style="left:100px;top:443px" width="16" height="16"><use href="#ball"/></svg><div class="sg" style="left:123px;top:435px;width:179px;background:#fdb45c;color:#2c3b5e;letter-spacing:0.187px">End&nbsp;of&nbsp;Function</div><svg class="abs" style="left:44px;top:479px" width="12" height="8" viewBox="0 0 12 8"><path d="M0 .3h12L6 7.600z" fill="#5a4040"/></svg><svg class="abs" style="left:60px;top:475px" width="16" height="16"><use href="#ball"/></svg><div class="sg" style="left:83px;top:467px;width:82px;background:#fdb45c;color:#2c3b5e;letter-spacing:-0.123px">Private&nbsp;</div><svg class="abs" style="left:80px;top:507px" width="16" height="16"><use href="#ball"/></svg><div class="sg" style="left:103px;top:499px;width:116px;background:#4486f8;color:#ffffff;letter-spacing:0.091px">Attributes&nbsp;</div>
<div class="abs" style="left:0;top:0;width:584px;height:19px;background:linear-gradient(#ffffff,#f2f2f2 60%,#ececec);border-bottom:1px solid #c4c4c4;border-right:1px solid #d4d4d4"></div>
<div class="t" style="left:3px;top:4px;font-size:11px;line-height:13px;letter-spacing:-.1px">Steps Tree</div>
<div class="abs" style="left:584px;top:0;width:15px;height:520px;background:#e4e4e4;border-left:1px solid #cfcfcf"></div>
<div class="abs" style="left:584px;top:0;width:15px;height:14px;background:#fdfdfd;border-left:1px solid #cfcfcf;border-bottom:1px solid #d8d8d8"></div>
<svg class="abs" style="left:588px;top:5px" width="8" height="5" viewBox="0 0 8 5"><path d="M0 4.500L4 .5L8 4.500z" fill="#555"/></svg>
<div class="abs" style="left:584px;top:177px;width:15px;height:274px;background:linear-gradient(90deg,#fdfdfd,#f4f4f4);border:1px solid #d0d0d0;border-right:none"></div>
<div class="abs" style="left:584px;top:504px;width:15px;height:15px;background:#fdfdfd;border-left:1px solid #cfcfcf;border-top:1px solid #d8d8d8"></div>
<svg class="abs" style="left:588px;top:510px" width="8" height="5" viewBox="0 0 8 5"><path d="M0 .5L4 4.500L8 .5z" fill="#555"/></svg>
</div>
<!-- TREE-END -->
<!-- mid tabs -->
<div class="abs" style="left:408px;top:692px;width:958px;height:1px;background:#c2c2c2"></div>
<div class="abs" style="left:408px;top:692px;width:93px;height:21px;background:linear-gradient(#e0e0e0,#d9d9d9);border:1px solid #c2c2c2;border-left:none;border-radius:0 0 3px 3px"></div>
<div class="abs" style="left:285px;top:690px;width:124px;height:25px;background:#f6f6f6;border:1px solid #bcbcbc;border-top:none;border-radius:0 0 3px 3px"></div>
<div class="t tab" style="left:297px;top:698px">App1Controller.pwct</div>
<div class="t tab" style="left:419px;top:697px;letter-spacing:-.3px">Form Designer</div>
<!-- SECTION-MID -->

<!-- RIGHT PANEL -->
<div class="abs" style="left:960px;top:140px;width:397px;height:542px;background:#f0f0f0;border:1px solid #ababab"></div>
<div class="abs" style="left:979px;top:159px;width:359px;height:40px;background:#800080"></div>
<div class="t" style="left:979px;top:166px;width:359px;text-align:center;color:#fff;font-size:24px;line-height:28px;letter-spacing:-.41px">Window Class Component</div>
<div class="t lbl" style="left:979px;top:208px;letter-spacing:-.1px">Object</div>
<div class="abs" style="left:1046px;top:205px;width:292px;height:29px;background:#fff;border:1px solid #000;border-radius:6px"></div>
<div class="t lbl" style="left:1050px;top:208px">win</div>
<div class="abs" style="left:1054px;top:240px;width:284px;height:22px;background:#fff;border:1px solid #b4b4b4;border-radius:3px"></div>
<div class="t" style="left:1057px;top:245px;font-size:11px;line-height:13px;letter-spacing:.05px">setwindowt</div>
<div class="t lbl" style="left:979px;top:340px;letter-spacing:-.25px">Method</div>
<!-- list -->
<div class="abs" id="mlist" style="left:1054px;top:268px;width:284px;height:192px;background:#fff;border:1px solid #a8a8a8;overflow:hidden">
<div class="abs" style="left:0;top:150px;width:268px;height:30px;background:#308cc6"></div>
<div class="t lit" style="top:2px">setwindowmodality</div>
<div class="t lit" style="top:32px">setwindowmodified</div>
<div class="t lit" style="top:62px">setwindowopacity</div>
<div class="t lit" style="top:92px">setwindowrole</div>
<div class="t lit" style="top:122px">setwindowstate</div>
<div class="t lit" style="top:152px;color:#fff">setwindowtitle</div>
<div class="t lit" style="top:182px">show</div>
<div class="abs" style="left:268px;top:0;width:14px;height:190px;background:#e4e4e4;border-left:1px solid #cfcfcf"></div>
<div class="abs" style="left:268px;top:0;width:14px;height:14px;background:#fdfdfd;border-left:1px solid #cfcfcf;border-bottom:1px solid #d8d8d8"></div>
<svg class="abs" style="left:271px;top:5px" width="8" height="5" viewBox="0 0 8 5"><path d="M0 4.500L4 .5L8 4.500z" fill="#555"/></svg>
<div class="abs" style="left:268px;top:123px;width:14px;height:28px;background:#fbfbfb;border:1px solid #d4d4d4;border-right:none"></div>
<div class="abs" style="left:268px;top:176px;width:14px;height:14px;background:#fdfdfd;border-left:1px solid #cfcfcf;border-top:1px solid #d8d8d8"></div>
<svg class="abs" style="left:271px;top:181px" width="8" height="5" viewBox="0 0 8 5"><path d="M0 .5L4 4.500L8 .5z" fill="#555"/></svg>
</div>
<div class="t lbl" style="left:979px;top:469px;letter-spacing:-.36px">Parameters</div>
<div class="abs" style="left:1091px;top:466px;width:247px;height:29px;background:#fff;border:1px solid #000;border-radius:6px"></div>
<div class="t lbl" style="left:1094px;top:469px;letter-spacing:-.2px">LineEdit1.t</div>
<div class="t lbl" style="left:979px;top:504px;letter-spacing:.1px">Output</div>
<div class="abs" style="left:1050px;top:501px;width:288px;height:29px;background:#fff;border:1px solid #000;border-radius:6px"></div>
<div class="abs" style="left:979px;top:536px;width:178px;height:27px;background:linear-gradient(#fefefe,#f6f6f6 50%,#ececec);border:1px solid #adadad;border-radius:3px"></div>
<svg class="abs" style="left:1005px;top:542px" width="14" height="14" viewBox="0 0 13 13"><defs><radialGradient id="gAg" cx="40%" cy="30%" r="75%"><stop offset="0" stop-color="#7cc4f4"/><stop offset="1" stop-color="#1c74c4"/></radialGradient></defs><circle cx="6.500" cy="6.500" r="6" fill="url(#gAg)"/><path d="M4 7.500a2.700 2.700 0 1 0 2.500-3.700" fill="none" stroke="#fff" stroke-width="1.400"/><path d="M7.200 2.200L4.600 3.900l2.600 1.600z" fill="#fff"/></svg>
<div class="t" style="left:1025px;top:541px;font-size:16px;line-height:20px;letter-spacing:-.35px">Again</div>
<!-- popup -->
<div class="abs" style="left:1091px;top:493px;width:247px;height:81px;background:#fff;border:1px solid #a4a4a4;box-shadow:3px 3px 4px rgba(0,0,0,.45)"></div>
<div class="t pp" style="top:495px">LineEdit1.text()</div>
<div class="t pp" style="top:510px">LineEdit1.textmargins()</div>
<div class="t pp" style="top:525px">LineEdit1.testattribute()</div>
<div class="t pp" style="top:540px">LineEdit1.tooltip()</div>
<div class="t pp" style="top:555px">LineEdit1.thread()</div>

<!-- splitter grips -->
<svg class="abs" style="left:268px;top:397px" width="18" height="3" viewBox="0 0 18 3"><g fill="#a4a4a4"><rect x="1" y="1" width="1" height="1"/><rect x="4" y="1" width="1" height="1"/><rect x="7" y="1" width="1" height="1"/><rect x="10" y="1" width="1" height="1"/><rect x="13" y="1" width="1" height="1"/><rect x="16" y="1" width="1" height="1"/></g></svg>
<svg class="abs" style="left:957px;top:403px" width="3" height="18" viewBox="0 0 3 18"><g fill="#a4a4a4"><rect x="1" y="1" width="1" height="1"/><rect x="1" y="4" width="1" height="1"/><rect x="1" y="7" width="1" height="1"/><rect x="1" y="10" width="1" height="1"/><rect x="1" y="13" width="1" height="1"/><rect x="1" y="16" width="1" height="1"/></g></svg>
<!-- SECTION-RIGHT -->
<!-- bottom dark strip -->
<div class="abs" style="left:0;top:737px;width:1366px;height:1px;background:#fbfbfb"></div><div class="abs" style="left:0;top:738px;width:1366px;height:1px;background:#15242c"></div>
</body>
</html>
